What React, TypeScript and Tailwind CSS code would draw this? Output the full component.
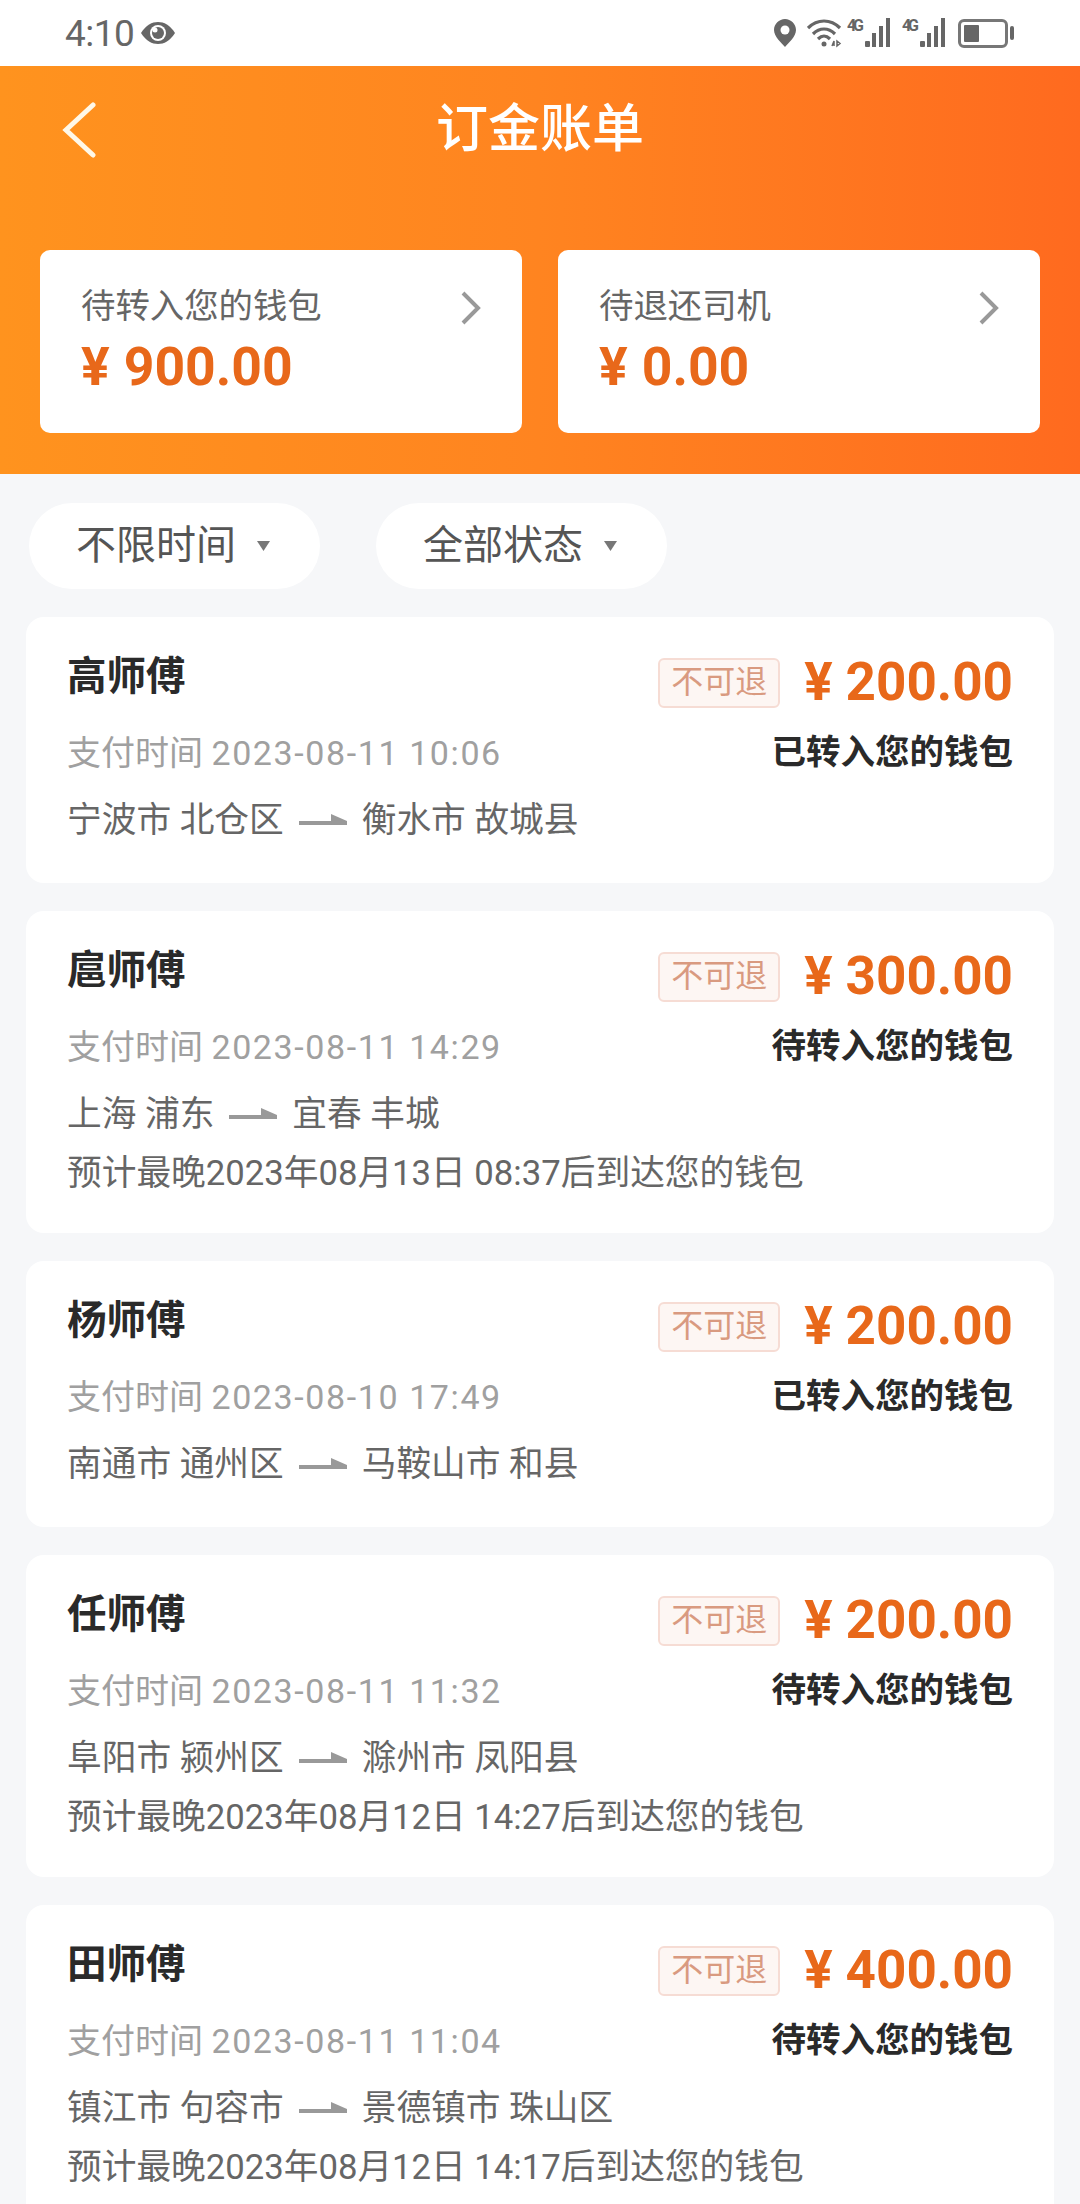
const font = { fontFamily: 'Roboto, "Noto Sans CJK SC", sans-serif' }

const orders = [
  { name: '高师傅', amount: '200.00', time: '2023-08-11 10:06', status: '已转入您的钱包', from: '宁波市 北仓区', to: '衡水市 故城县' },
  { name: '扈师傅', amount: '300.00', time: '2023-08-11 14:29', status: '待转入您的钱包', from: '上海 浦东', to: '宜春 丰城', eta: '预计最晚2023年08月13日 08:37后到达您的钱包' },
  { name: '杨师傅', amount: '200.00', time: '2023-08-10 17:49', status: '已转入您的钱包', from: '南通市 通州区', to: '马鞍山市 和县' },
  { name: '任师傅', amount: '200.00', time: '2023-08-11 11:32', status: '待转入您的钱包', from: '阜阳市 颍州区', to: '滁州市 凤阳县', eta: '预计最晚2023年08月12日 14:27后到达您的钱包' },
  { name: '田师傅', amount: '400.00', time: '2023-08-11 11:04', status: '待转入您的钱包', from: '镇江市 句容市', to: '景德镇市 珠山区', eta: '预计最晚2023年08月12日 14:17后到达您的钱包' },
]

function Signal() {
  return (
    <svg width="46" height="32" viewBox="0 0 46 32" fill="#666">
      <text x="0" y="14" fontSize="16" fontWeight="700" fontFamily="Roboto, sans-serif" textLength="17">4G</text>
      <rect x="18" y="24" width="5" height="6" rx="1" />
      <rect x="25" y="16" width="4" height="14" />
      <rect x="32" y="9" width="4" height="21" />
      <rect x="39" y="1" width="4" height="29" />
    </svg>
  )
}

function StatusBar() {
  return (
    <div className="h-[66px] bg-white flex items-center justify-between pl-[65px] pr-[66px]">
      <div className="flex items-center gap-[6px] text-[#666]">
        <span className="text-[37px] leading-none tracking-[-0.5px]" style={font}>4:10</span>
        <svg width="36" height="26" viewBox="0 0 36 26">
          <path d="M1 13C6 5 12 2 18 2s12 3 17 11c-5 8-11 11-17 11S6 21 1 13z" fill="#666" />
          <circle cx="18" cy="13" r="8" fill="#fff" />
          <circle cx="18" cy="13" r="6" fill="#666" />
          <circle cx="15" cy="10" r="2.5" fill="#fff" />
        </svg>
      </div>
      <div className="flex items-center">
        <svg width="24" height="30" viewBox="0 0 24 30" className="mr-[10px]">
          <path d="M12 1C6 1 1 6 1 12c0 7 8 13 11 17 3-4 11-10 11-17 0-6-5-11-11-11z" fill="#666" />
          <circle cx="12" cy="12" r="4.5" fill="#fff" />
        </svg>
        <svg width="36" height="30" viewBox="0 0 36 30" fill="none" stroke="#666" strokeWidth="3.2" className="mr-[4px]">
          <path d="M1 10C6 5 11 3 17 3s11 2 16 7" />
          <path d="M6 16c3-3 7-5 11-5s8 2 11 5" />
          <path d="M11 21c2-2 4-3 6-3s4 1 6 3" />
          <circle cx="17" cy="26" r="2.5" fill="#666" stroke="none" />
          <path d="M25 28l2-5v5M30 23v5l3-2.500z" strokeWidth="1.500" />
        </svg>
        <Signal />
        <div className="w-[9px]" />
        <Signal />
        <div className="ml-[10px] flex items-center gap-[2px]">
          <div className="w-[50px] h-[29px] rounded-[6px] border-[3px] border-[#777] p-[3px]">
            <div className="w-[15px] h-full bg-[#666] rounded-[1px]" />
          </div>
          <div className="w-[4px] h-[14px] bg-[#666] rounded-full" />
        </div>
      </div>
    </div>
  )
}

function SummaryCard({ label, amount }: { label: string; amount: string }) {
  return (
    <div className="relative w-[482px] h-[183px] bg-white rounded-[10px] pl-[41px] pt-[33px]">
      <div className="text-[34.4px] leading-[46px] text-[#666]" style={font}>{label}</div>
      <div className="mt-[10px] text-[#e8681a] font-bold text-[53.5px] leading-[56px] flex items-center" style={font}>
        <span className="mr-[14px]">¥</span>{amount}
      </div>
      <svg width="24" height="36" viewBox="0 0 24 36" fill="none" stroke="#999" strokeWidth="4" className="absolute right-[39px] top-[40px]">
        <path d="M4 3l15 15L4 33" />
      </svg>
    </div>
  )
}

function FilterPill({ label }: { label: string }) {
  return (
    <div className="w-[291px] h-[86px] bg-white rounded-[43px] flex items-center pl-[47px] text-[#555] text-[40px]" style={font}>
      {label}
      <svg width="15" height="12" viewBox="0 0 15 12" className="ml-[20px]"><path d="M1 1h13L7.500 11z" fill="#777" /></svg>
    </div>
  )
}

function OrderCard({ order }: { order: (typeof orders)[number] }) {
  return (
    <div className={(order.eta ? 'h-[322px]' : 'h-[266px]') + ' bg-white rounded-[18px] pl-[41px] pr-[41px] pt-[34px]'}>
      <div className="flex justify-between h-[60px]">
        <div className="pt-[1px] text-[39.5px] leading-[50px] font-bold text-[#2a2a2a]" style={font}>{order.name}</div>
        <div className="flex items-start">
          <div className="w-[122px] h-[50px] mt-[7px] rounded-[6px] border-2 border-[#f6dcd4] bg-[#fdf6f3] text-[#d99a80] text-[32px] leading-[44px] text-center" style={font}>不可退</div>
          <div className="ml-[24px] text-[#e8681a] font-bold text-[53px] leading-[62px] flex" style={font}>
            <span className="mr-[13px]">¥</span>{order.amount}
          </div>
        </div>
      </div>
      <div className="flex justify-between items-center mt-[19px] h-[46px]">
        <div className="text-[34px] text-[#a0a0a0]" style={font}>支付时间 <span className="tracking-[1.6px]">{order.time}</span></div>
        <div className="text-[34.500px] font-bold text-[#2a2a2a]" style={font}>{order.status}</div>
      </div>
      <div className="flex items-center mt-[21px] h-[46px] text-[34.700px] text-[#666]" style={font}>
        {order.from}
        <svg width="48" height="14" viewBox="0 0 48 14" className="mx-[15px]"><path d="M0 8h48v4H0zM32 1l16 7H32z" fill="#999" /></svg>
        {order.to}
      </div>
      {order.eta && (
        <div className="mt-[13px] h-[46px] text-[34.700px] leading-[46px] text-[#666]" style={font}>{order.eta}</div>
      )}
    </div>
  )
}

export default function App() {
  return (
    <div className="w-[1080px] h-[2204px] overflow-hidden bg-[#f6f7f9]">
      <StatusBar />
      <div className="h-[408px] bg-gradient-to-r from-[#ff931e] via-[#ff8420] to-[#ff6a1f] px-[40px]">
        <div className="relative h-[184px] pt-[34px] text-center text-white text-[52px] leading-[60px] font-medium" style={font}>
          <svg width="34" height="56" viewBox="0 0 34 56" fill="none" stroke="#fff8e8" strokeWidth="5" strokeLinecap="round" className="absolute left-[22px] top-[36px]">
            <path d="M31 3L4 28l27 25" />
          </svg>
          订金账单
        </div>
        <div className="flex justify-between">
          <SummaryCard label="待转入您的钱包" amount="900.00" />
          <SummaryCard label="待退还司机" amount="0.00" />
        </div>
      </div>
      <div className="flex gap-[56px] pl-[29px] pt-[29px]">
        <FilterPill label="不限时间" />
        <FilterPill label="全部状态" />
      </div>
      <div className="flex flex-col gap-[28px] mx-[26px] mt-[28px]">
        {orders.map((order) => (
          <OrderCard key={order.name} order={order} />
        ))}
      </div>
    </div>
  )
}
